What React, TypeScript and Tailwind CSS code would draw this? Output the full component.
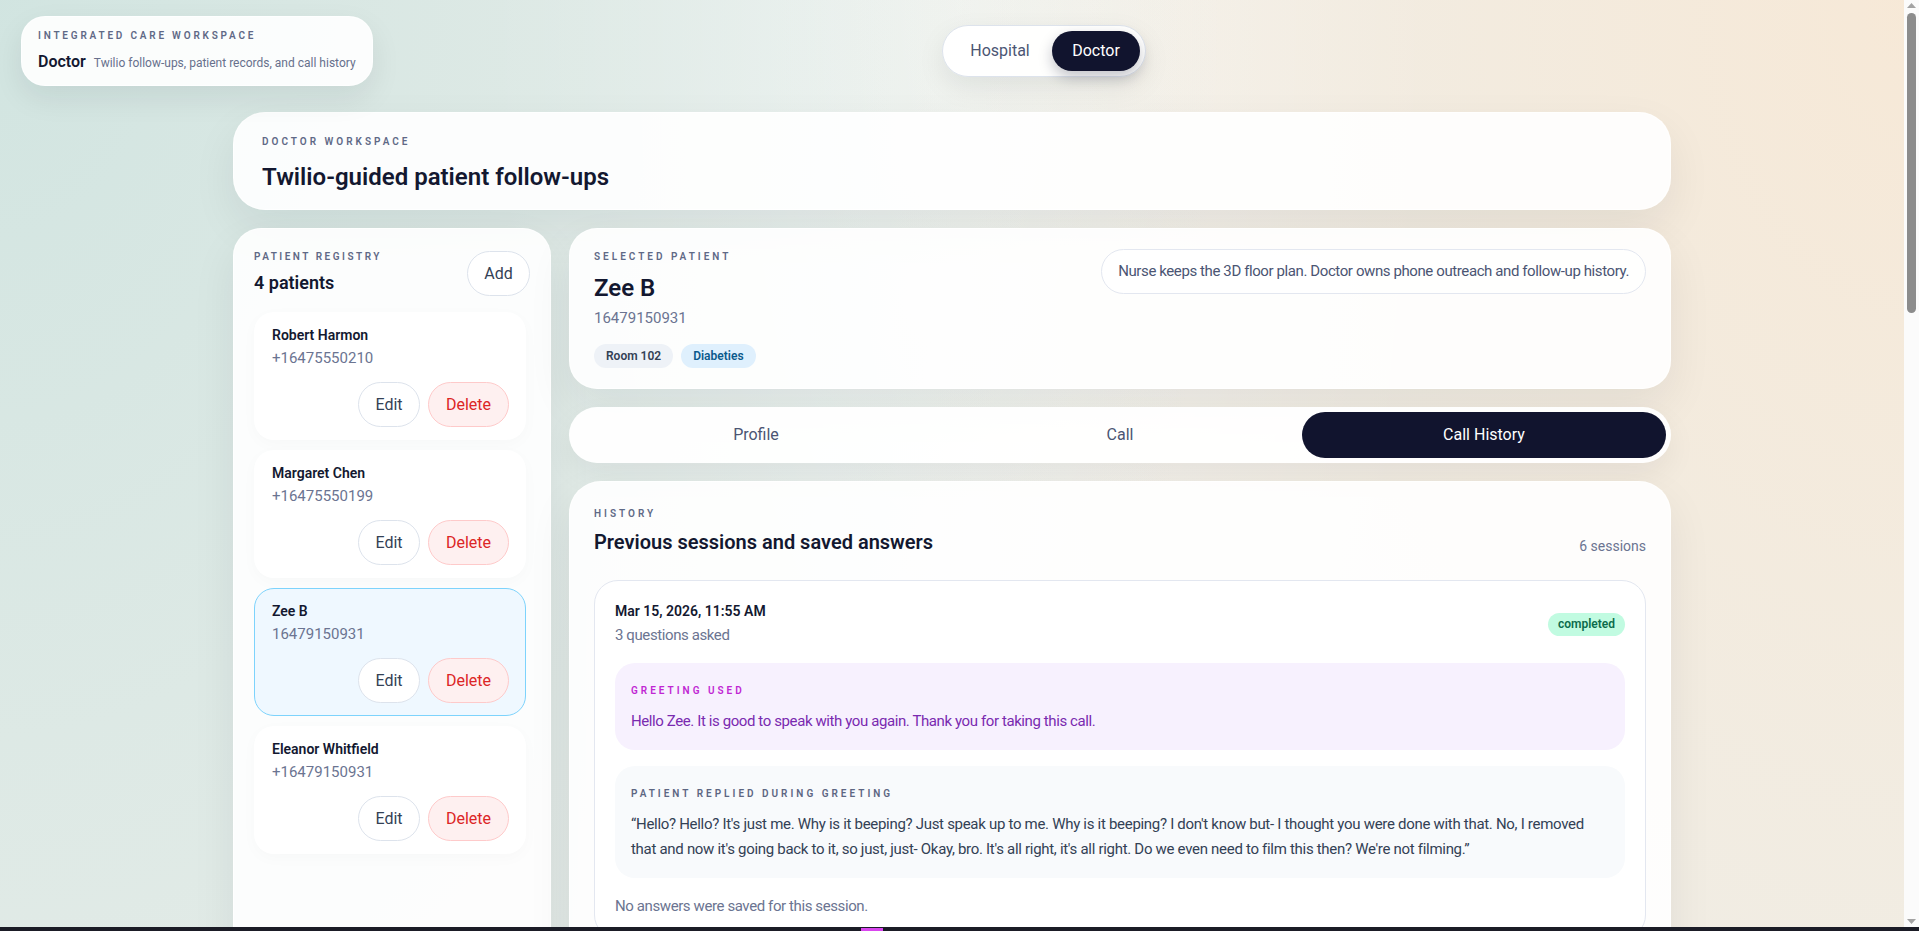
import { useState } from "react";

type Patient = { name: string; phone: string };

const patients: Patient[] = [
  { name: "Robert Harmon", phone: "+16475550210" },
  { name: "Margaret Chen", phone: "+16475550199" },
  { name: "Zee B", phone: "16479150931" },
  { name: "Eleanor Whitfield", phone: "+16479150931" },
];

type Answer = { question: string; answer: string };
type Session = {
  date: string;
  asked: number;
  greeting: string;
  reply?: string;
  answers: Answer[];
};

const sessions: Session[] = [
  {
    date: "Mar 15, 2026, 11:55 AM",
    asked: 3,
    greeting: "Hello Zee. It is good to speak with you again. Thank you for taking this call.",
    reply:
      "\u201cHello? Hello? It's just me. Why is it beeping? Just speak up to me. Why is it beeping? I don't know but- I thought you were done with that. No, I removed that and now it's going back to it, so just, just- Okay, bro. It's all right, it's all right. Do we even need to film this then? We're not filming.\u201d",
    answers: [],
  },
  {
    date: "Mar 14, 2026, 4:12 PM",
    asked: 3,
    greeting: "Hello Zee. This is your follow-up call from the care team. Do you have a few minutes?",
    answers: [
      { question: "How have you been feeling since your last visit?", answer: "Pretty good, a little tired" },
      { question: "Have you been checking your blood sugar?", answer: "Yes, most mornings" },
      { question: "Are you taking your medication as prescribed?", answer: "Yes, twice a day" },
    ],
  },
  {
    date: "Mar 12, 2026, 10:03 AM",
    asked: 3,
    greeting: "Hello Zee. It is good to speak with you again. Thank you for taking this call.",
    answers: [
      { question: "How have you been feeling since your last visit?", answer: "Better than last week" },
      { question: "Have you noticed any dizziness or blurred vision?", answer: "No" },
      { question: "Is there anything you would like the doctor to know?", answer: "Diet plan questions" },
    ],
  },
  {
    date: "Mar 10, 2026, 2:40 PM",
    asked: 3,
    greeting: "Hello Zee. This is your follow-up call from the care team.",
    answers: [
      { question: "How have you been feeling since your last visit?", answer: "Okay, some headaches" },
      { question: "Are you taking your medication as prescribed?", answer: "Missed one dose" },
      { question: "Would you like another call next week?", answer: "Yes" },
    ],
  },
  {
    date: "Mar 8, 2026, 9:18 AM",
    asked: 3,
    greeting: "Hello Zee. It is good to speak with you again.",
    answers: [
      { question: "How have you been feeling since your last visit?", answer: "Fine" },
      { question: "Have you been checking your blood sugar?", answer: "Yes" },
      { question: "Is there anything you would like the doctor to know?", answer: "No" },
    ],
  },
  {
    date: "Mar 6, 2026, 3:27 PM",
    asked: 3,
    greeting: "Hello Zee. This is your first follow-up call from the care team.",
    answers: [
      { question: "How have you been feeling since your last visit?", answer: "A bit nervous" },
      { question: "Do you understand your medication schedule?", answer: "Yes" },
      { question: "Would you like another call next week?", answer: "Yes, please" },
    ],
  },
];

function SessionCard({ session }: { session: Session }) {
  return (
    <div className="rounded-[24px] border border-[#e3e7f0] bg-white p-5">
      <div className="flex items-center justify-between">
        <div>
          <p className="text-[14px] font-semibold leading-5 text-[#131830]">{session.date}</p>
          <p className="mt-0.5 text-[15px] leading-6 tracking-[-0.4px] text-[#6b7491]">{session.asked} questions asked</p>
        </div>
        <span className="rounded-full bg-[#c1fbe1] px-2.5 py-[3px] text-[12px] font-semibold leading-[17px] text-[#0b6b4c]">
          completed
        </span>
      </div>
      <div className="mt-4 flex flex-col gap-4">
        <div className="rounded-[20px] bg-[#f7f1fe] px-4 pt-5 pb-4">
          <p className="text-[10px] font-semibold uppercase leading-4 tracking-[0.3em] text-[#c026d3]">Greeting used</p>
          <p className="mt-2.5 text-[15px] leading-[25px] tracking-[-0.4px] text-[#7a2ab0]">{session.greeting}</p>
        </div>
        {session.reply && (
          <div className="rounded-[20px] bg-[#f8fafc] px-4 pt-5 pb-4">
            <p className="text-[10px] font-semibold uppercase leading-4 tracking-[0.3em] text-[#5d6682]">
              Patient replied during greeting
            </p>
            <p className="mt-2.5 text-[15px] leading-[25px] tracking-[-0.3px] text-[#334155]">{session.reply}</p>
          </div>
        )}
      </div>
      {session.answers.length === 0 ? (
        <p className="mt-4 text-[15px] leading-6 tracking-[-0.4px] text-[#6b7491]">No answers were saved for this session.</p>
      ) : (
        <div className="mt-4 flex flex-col gap-2 rounded-[20px] border border-[#e3e7f0] px-4 py-4">
          {session.answers.map((a, i) => (
            <div key={i} className="flex items-center justify-between gap-4 text-[15px] leading-6 tracking-[-0.4px]">
              <span className="text-[#475569]">{a.question}</span>
              <span className="font-semibold text-[#131830]">{a.answer}</span>
            </div>
          ))}
        </div>
      )}
    </div>
  );
}

export default function App() {
  const [selected, setSelected] = useState(2);
  const [tab, setTab] = useState("Call History");
  const [mode, setMode] = useState("Doctor");
  const current = patients[selected];

  return (
    <div className="min-h-screen bg-[#edefeb] bg-[radial-gradient(ellipse_at_0%_0%,rgba(200,225,221,0.75),transparent_45%),radial-gradient(ellipse_at_100%_0%,rgba(249,231,210,0.8),transparent_42%),radial-gradient(ellipse_at_50%_0%,rgba(255,255,255,0.6),transparent_35%)] pr-[15px] font-['Roboto','Liberation_Sans',sans-serif] text-[#131830]">
      <header className="grid h-[112px]">
        <div className="[grid-area:1/1] mt-4 ml-[21px] self-start justify-self-start rounded-[24px] border border-white/70 bg-white/90 px-4 pt-3 pb-[11px] shadow-[0_12px_30px_rgba(15,23,42,0.08)]">
          <p className="text-[10px] font-semibold uppercase leading-[14px] tracking-[0.28em] text-[#5f6986]">
            Integrated care workspace
          </p>
          <div className="mt-[7px] flex items-baseline gap-2">
            <span className="text-[16px] font-semibold leading-6 text-[#131830]">Doctor</span>
            <span className="text-[12px] text-[#67708c]">Twilio follow-ups, patient records, and call history</span>
          </div>
        </div>
        <div className="[grid-area:1/1] mt-[25px] ml-[184px] flex self-start justify-self-center rounded-full border border-[#dde3ec] bg-white/95 p-[5px] shadow-[0_10px_28px_rgba(15,23,42,0.08)]">
          {["Hospital", "Doctor"].map((m) => (
            <button
              key={m}
              onClick={() => setMode(m)}
              className={
                m === mode
                  ? "h-10 w-[88px] rounded-full bg-[#11142e] text-[16px] text-white shadow-[0_6px_14px_rgba(17,20,46,0.25)]"
                  : "h-10 w-[104px] rounded-full text-[16px] text-[#4b5573]"
              }
            >
              {m}
            </button>
          ))}
        </div>
      </header>

      <main className="mx-auto w-[1438px] pb-10">
        <section className="rounded-[32px] border border-white/70 bg-white/90 px-7 pt-[22px] pb-4 shadow-[0_18px_45px_rgba(15,23,42,0.07)]">
          <p className="text-[10px] font-semibold uppercase leading-[14px] tracking-[0.3em] text-[#5f6986]">Doctor workspace</p>
          <h1 className="mt-3 text-[24px] font-semibold leading-8 text-[#131830]">Twilio-guided patient follow-ups</h1>
        </section>

        <div className="mt-[18px] grid grid-cols-[318px_1fr] gap-[18px]">
          <aside className="rounded-[28px] border border-white/70 bg-white/90 px-5 pt-5 shadow-[0_18px_45px_rgba(15,23,42,0.07)]">
            <div className="flex items-start justify-between">
              <div>
                <p className="text-[10px] font-semibold uppercase leading-4 tracking-[0.25em] text-[#5f6986]">Patient registry</p>
                <p className="mt-1 text-[18px] font-semibold leading-7 text-[#131830]">{patients.length} patients</p>
              </div>
              <button className="mt-0.5 h-[45px] w-[63px] rounded-full border border-[#dde3ec] bg-white text-[16px] text-[#334155]">
                Add
              </button>
            </div>
            <div className="mt-[15px] flex flex-col gap-2.5 pr-1">
              {patients.map((p, i) => (
                <div
                  key={p.name}
                  onClick={() => setSelected(i)}
                  className={
                    i === selected
                      ? "rounded-[20px] border border-[#7dd3fc] bg-[#eff8ff] pt-3 pr-4 pb-3 pl-[17px]"
                      : "rounded-[20px] border border-transparent bg-white pt-3 pr-4 pb-3 pl-[17px] shadow-[0_4px_16px_rgba(15,23,42,0.025)]"
                  }
                >
                  <p className="text-[14px] font-semibold leading-5 text-[#131830]">{p.name}</p>
                  <p className="mt-px text-[15px] leading-6 text-[#6b7491]">{p.phone}</p>
                  <div className="mt-3 flex justify-end gap-2">
                    <button className="h-[45px] w-[62px] rounded-full border border-[#dde3ec] bg-white text-[16px] text-[#334155]">
                      Edit
                    </button>
                    <button className="h-[45px] w-[81px] rounded-full border border-[#fecaca] bg-[#fef0f0] text-[16px] text-[#dc2626]">
                      Delete
                    </button>
                  </div>
                </div>
              ))}
            </div>
          </aside>

          <div className="flex flex-col gap-[18px]">
            <section className="flex items-start justify-between rounded-[28px] border border-white/70 bg-white/90 px-6 pt-5 pb-5 shadow-[0_18px_45px_rgba(15,23,42,0.07)]">
              <div>
                <p className="text-[10px] font-semibold uppercase leading-4 tracking-[0.3em] text-[#5f6986]">Selected patient</p>
                <h2 className="mt-[7px] text-[24px] font-semibold leading-8 text-[#131830]">{current.name}</h2>
                <p className="mt-0.5 text-[15px] leading-6 text-[#6b7491]">{current.phone}</p>
                <div className="mt-[14px] flex gap-2">
                  <span className="flex h-6 items-center rounded-full bg-[#eef2f7] px-3 text-[12px] font-semibold text-[#334155]">
                    Room 102
                  </span>
                  <span className="flex h-6 items-center rounded-full bg-[#dff0fd] px-3 text-[12px] font-semibold text-[#0b5a8c]">
                    Diabeties
                  </span>
                </div>
              </div>
              <p className="flex h-[45px] items-center rounded-full border border-[#e3e7f0] bg-white/80 px-4 text-[15px] tracking-[-0.4px] text-[#4b5573]">
                Nurse keeps the 3D floor plan. Doctor owns phone outreach and follow-up history.
              </p>
            </section>

            <nav className="grid grid-cols-3 rounded-full bg-white/95 p-[5px] shadow-[0_12px_30px_rgba(15,23,42,0.06)]">
              {["Profile", "Call", "Call History"].map((t) => (
                <button
                  key={t}
                  onClick={() => setTab(t)}
                  className={
                    t === tab
                      ? "h-[46px] rounded-full bg-[#11142e] text-[16px] text-white"
                      : "h-[46px] rounded-full text-[16px] text-[#4b5573]"
                  }
                >
                  {t}
                </button>
              ))}
            </nav>

            <section className="rounded-[32px] border border-white/70 bg-white/90 px-6 pt-6 pb-6 shadow-[0_18px_45px_rgba(15,23,42,0.07)]">
              <div className="flex items-end justify-between">
                <div>
                  <p className="text-[10px] font-semibold uppercase leading-4 tracking-[0.3em] text-[#5f6986]">History</p>
                  <h3 className="mt-1.5 text-[20px] font-semibold leading-7 text-[#131830]">Previous sessions and saved answers</h3>
                </div>
                <p className="text-[14px] leading-5 text-[#6b7491]">{sessions.length} sessions</p>
              </div>
              <div className="mt-6 flex flex-col gap-4">
                {sessions.map((s) => (
                  <SessionCard key={s.date} session={s} />
                ))}
              </div>
            </section>
          </div>
        </div>
      </main>

      <div className="fixed top-0 right-0 bottom-0 flex w-[15px] flex-col items-center justify-between bg-[#fbfbfb] py-[3px]">
        <div className="flex flex-col items-center">
          <svg width="9" height="5" viewBox="0 0 9 5">
            <path d="M0 5 L4.5 0 L9 5 Z" fill="#a3a3a3" />
          </svg>
          <div className="mt-[5px] h-[300px] w-[9px] rounded-full bg-[#8c8c8c]" />
        </div>
        <svg width="9" height="5" viewBox="0 0 9 5" className="mb-[4px]">
          <path d="M0 0 L9 0 L4.5 5 Z" fill="#a3a3a3" />
        </svg>
      </div>

      <div className="fixed inset-x-0 bottom-0 flex h-[4px] bg-[#1b1c26]">
        <div className="ml-[861px] mt-[1px] h-[3px] w-[22px] bg-[#d946ef]" />
      </div>
    </div>
  );
}
